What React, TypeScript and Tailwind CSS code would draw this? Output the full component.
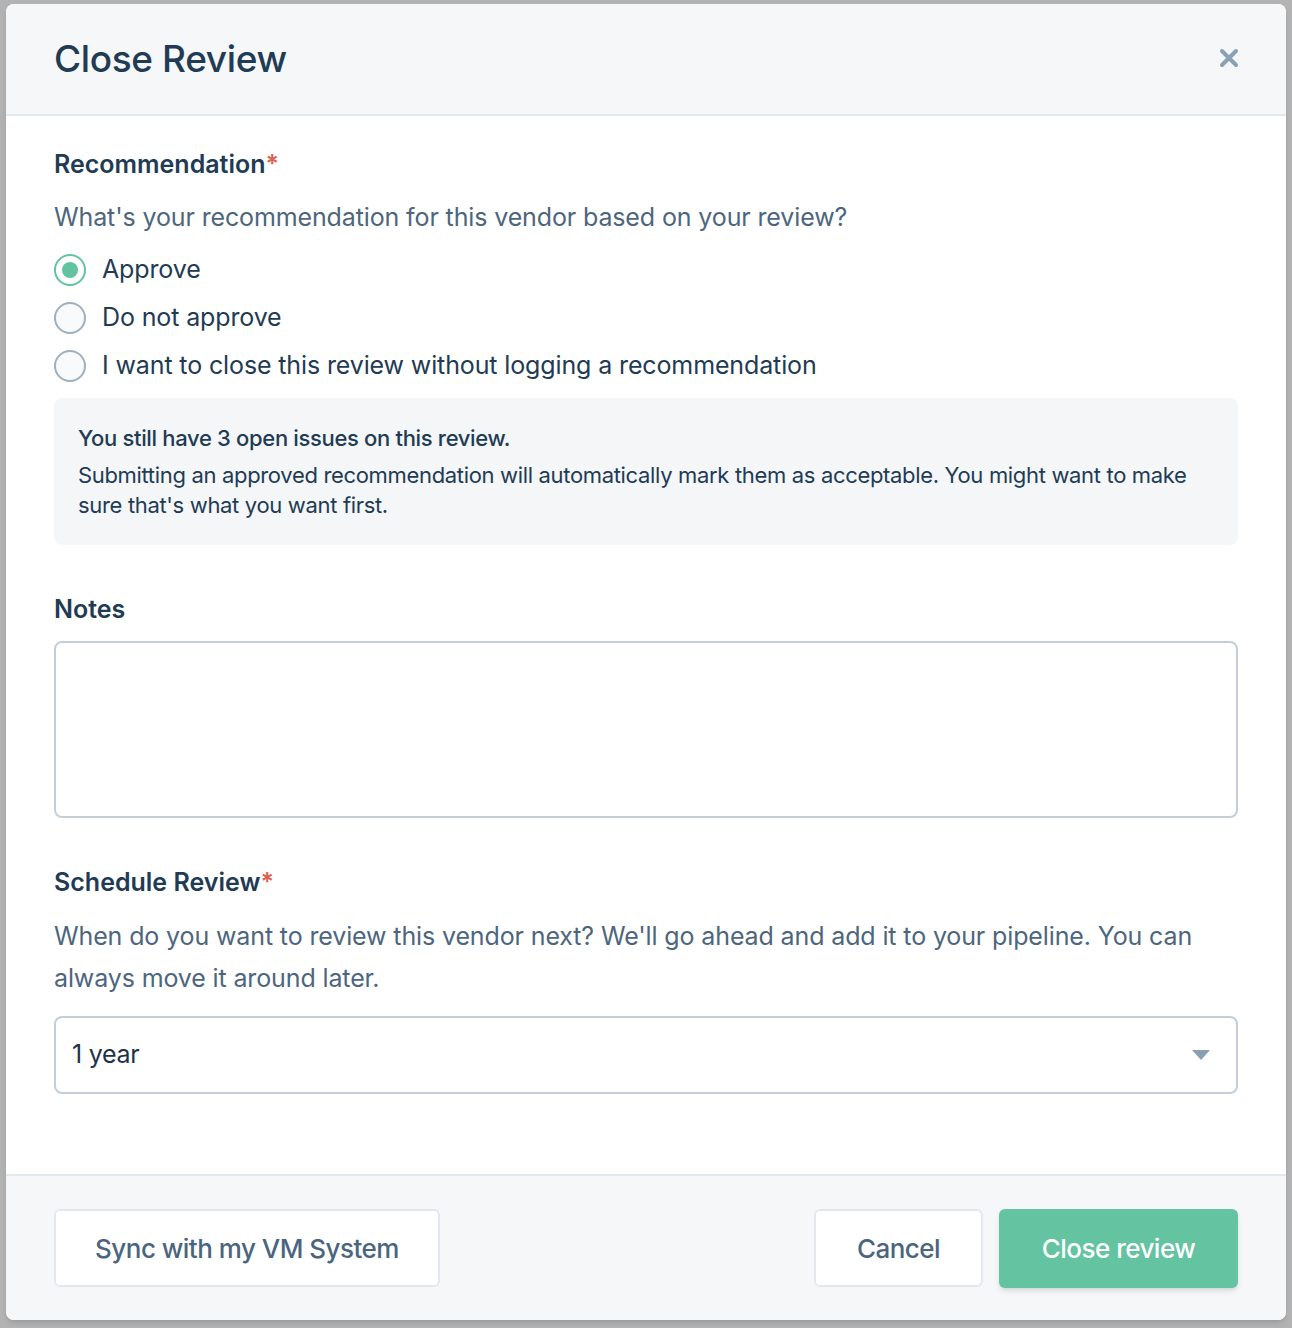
import { useState } from 'react'

const font = { fontFamily: 'Inter, "Noto Sans", sans-serif' }

const options = [
  { id: 'approve', label: 'Approve' },
  { id: 'reject', label: 'Do not approve' },
  { id: 'none', label: 'I want to close this review without logging a recommendation' },
]

function Radio({ checked }: { checked: boolean }) {
  return checked ? (
    <span className="flex h-8 w-8 items-center justify-center rounded-full border-2 border-[#63c3a0] bg-white">
      <span className="h-4 w-4 rounded-full bg-[#63c3a0]" />
    </span>
  ) : (
    <span className="h-8 w-8 rounded-full border-2 border-[#9cb0c1] bg-[#f8fafc]" />
  )
}

export default function App() {
  const [choice, setChoice] = useState('approve')

  return (
    <div className="h-[1328px] w-full overflow-hidden bg-[#b3b3b3] pl-[6px] pt-[4px]" style={font}>
      <div className="flex h-[1316px] w-[1280px] flex-col overflow-hidden rounded-lg bg-white shadow-md">
        {/* header */}
        <div className="flex h-[112px] shrink-0 items-center justify-between border-b-2 border-[#e3e9ef] bg-[#f5f7f9] pl-12 pr-[46px]">
          <h1 className="text-[37px] font-medium tracking-[-0.01em] text-[#223b54]">Close Review</h1>
          <svg width="22" height="22" viewBox="0 0 22 22" className="mt-[-2px]">
            <path d="M4 4 L18 18 M18 4 L4 18" stroke="#8aa0b3" strokeWidth="4" strokeLinecap="round" />
          </svg>
        </div>

        {/* body */}
        <div className="flex-1 px-12 pt-8">
          <div className="text-[25px] font-semibold leading-8 text-[#223b54]">
            Recommendation<span className="text-[#e0604f]">*</span>
          </div>
          <p className="mt-[21px] text-[25px] leading-8 tracking-[-0.005em] text-[#4d667d]">
            What's your recommendation for this vendor based on your review?
          </p>
          <div className="mt-[13px] flex flex-col">
            {options.map((o) => (
              <label
                key={o.id}
                className="flex h-12 cursor-pointer items-center gap-4"
                onClick={() => setChoice(o.id)}
              >
                <Radio checked={choice === o.id} />
                <span className="text-[25px] tracking-[-0.005em] text-[#223b54]">{o.label}</span>
              </label>
            ))}
          </div>

          <div className="mt-2 rounded-lg bg-[#f4f6f8] px-6 pb-[25px] pt-[25px] text-[22px] leading-[30px] tracking-[-0.015em] text-[#223b54]">
            <p className="font-medium">You still have 3 open issues on this review.</p>
            <p className="mt-[7px]">
              Submitting an approved recommendation will automatically mark them as acceptable. You might want to make
              sure that's what you want first.
            </p>
          </div>

          <div className="mt-12 text-[25px] font-semibold leading-8 text-[#223b54]">Notes</div>
          <textarea className="mt-4 block h-[177px] w-full resize-none rounded-lg border-2 border-[#c3ced8] outline-none" />

          <div className="mt-12 text-[25px] font-semibold leading-8 text-[#223b54]">
            Schedule Review<span className="text-[#e0604f]">*</span>
          </div>
          <p className="mt-[17px] text-[25px] leading-[42px] tracking-[-0.005em] text-[#4d667d]">
            When do you want to review this vendor next? We'll go ahead and add it to your pipeline. You can always move
            it around later.
          </p>
          <div className="mt-[17px] flex h-[78px] items-center justify-between rounded-lg border-2 border-[#c3ced8] pl-4 pr-[26px]">
            <span className="text-[25px] tracking-[-0.01em] text-[#1e3349]">1 year</span>
            <svg width="18" height="10" viewBox="0 0 18 10">
              <path d="M0 0 H18 L9 10 Z" fill="#8a9fb3" />
            </svg>
          </div>
        </div>

        {/* footer */}
        <div className="flex h-[146px] shrink-0 items-start justify-between border-t-2 border-[#e3e9ef] bg-[#f5f7f9] px-12 pt-[33px]">
          <button className="h-[78px] w-[386px] rounded-md border-2 border-[#e2e8ee] bg-white text-[26px] font-medium tracking-[-0.02em] text-[#4a6580]">
            Sync with my VM System
          </button>
          <div className="flex gap-4">
            <button className="h-[78px] w-[169px] rounded-md border-2 border-[#e2e8ee] bg-white text-[26px] font-medium tracking-[-0.02em] text-[#4a6580]">
              Cancel
            </button>
            <button className="h-[79px] w-[239px] rounded-md bg-[#64c3a1] text-[26px] font-medium tracking-[-0.02em] text-white shadow-md">
              Close review
            </button>
          </div>
        </div>
      </div>
    </div>
  )
}
